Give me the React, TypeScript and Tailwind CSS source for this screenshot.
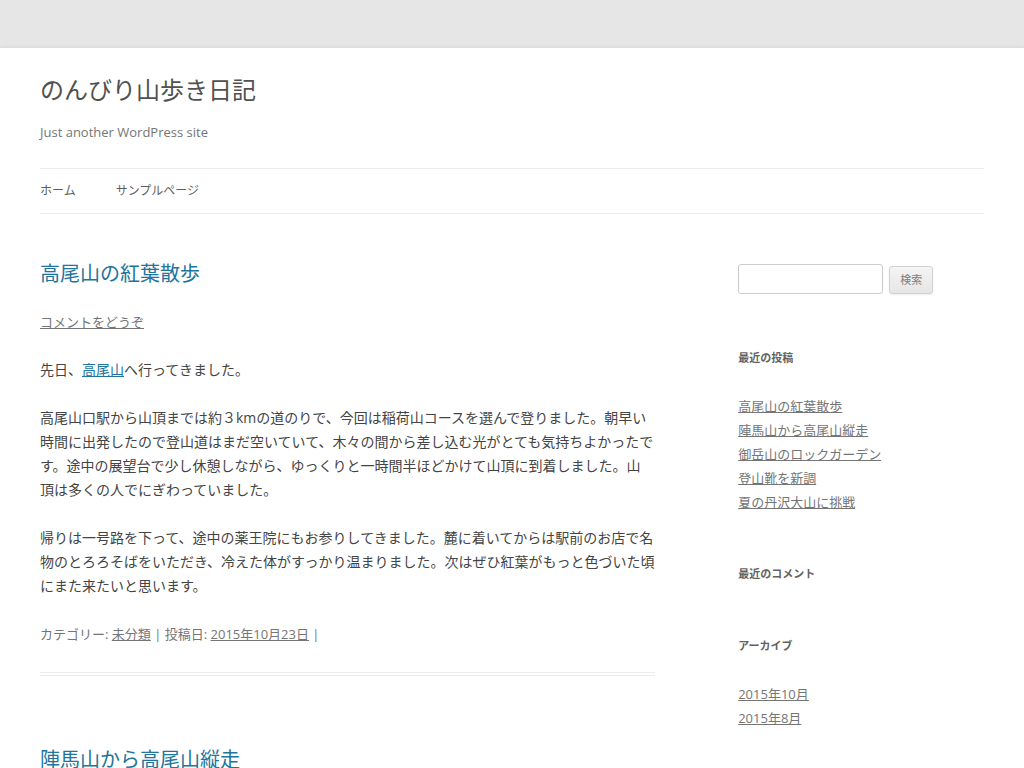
const recentPosts = [
  "高尾山の紅葉散歩",
  "陣馬山から高尾山縦走",
  "御岳山のロックガーデン",
  "登山靴を新調",
  "夏の丹沢大山に挑戦",
];

const archives = ["2015年10月", "2015年8月"];

export default function App() {
  return (
    <div className="min-h-screen bg-[#e6e6e6] pt-[48px] font-['Open_Sans','Noto_Sans_CJK_JP',sans-serif] text-[#444]">
      <div className="min-h-[720px] bg-white px-[40px] shadow-[0_2px_6px_rgba(100,100,100,0.3)]">
        <header className="pt-[27px] pb-[24px]">
          <h1 className="mb-[14px] text-[24px] leading-[30.86px] text-[#515151]">
            のんびり山歩き日記
          </h1>
          <h2 className="text-[13px] leading-[24px] text-[#757575]">
            Just another WordPress site
          </h2>
          <nav className="mt-[24px] border-y border-[#ededed]">
            <ul className="flex text-[12px] leading-[44.3px] text-[#5e5e5e]">
              <li className="mr-[40px]">ホーム</li>
              <li className="mr-[40px]">サンプルページ</li>
            </ul>
          </nav>
        </header>

        <div className="flex justify-between pt-[24px]">
          <main className="w-[65.104166667%]">
            <article className="mb-[72px] border-b-4 border-double border-[#ededed] pb-[26px]">
              <EntryHeader title="高尾山の紅葉散歩" />
              <div className="text-[14px] leading-[24px]">
                <p className="mb-[24px]">
                  先日、<a className="text-[#21759b] underline">高尾山</a>へ行ってきました。
                </p>
                <p className="mb-[24px]">
                  高尾山口駅から山頂までは約３kmの道のりで、今回は稲荷山コースを選んで登りました。朝早い時間に出発したので登山道はまだ空いていて、木々の間から差し込む光がとても気持ちよかったです。途中の展望台で少し休憩しながら、ゆっくりと一時間半ほどかけて山頂に到着しました。山頂は多くの人でにぎわっていました。
                </p>
                <p className="mb-[24px]">
                  帰りは一号路を下って、途中の薬王院にもお参りしてきました。麓に着いてからは駅前のお店で名物のとろろそばをいただき、冷えた体がすっかり温まりました。次はぜひ紅葉がもっと色づいた頃にまた来たいと思います。
                </p>
              </div>
              <footer className="text-[13px] leading-[24px] text-[#757575]">
                カテゴリー: <a className="underline">未分類</a> | 投稿日:{" "}
                <a className="underline">2015年10月23日</a> |
              </footer>
            </article>

            <article className="mb-[72px] pb-[24px]">
              <EntryHeader title="陣馬山から高尾山縦走" />
              <div className="text-[14px] leading-[24px]">
                <p className="mb-[24px]">
                  八月の終わりに、陣馬山から高尾山までの縦走に挑戦しました。
                </p>
              </div>
            </article>
          </main>

          <aside className="w-[26.041666667%]">
            <section className="mb-[48px] h-[36px]">
              <form className="flex items-end gap-[6px] pt-[2px]">
                <input
                  type="text"
                  className="h-[30px] w-[145px] rounded-[3px] border border-[#ccc] px-[6px] text-[12px] outline-none"
                />
                <button
                  type="button"
                  className="h-[28px] rounded-[3px] border border-[#d2d2d2] bg-linear-to-b from-[#f4f4f4] to-[#e6e6e6] px-[10px] text-[11px] leading-[16px] text-[#7c7c7c] shadow-[0_1px_2px_rgba(64,64,64,0.1)]"
                >
                  検索
                </button>
              </form>
            </section>

            <Widget title="最近の投稿" items={recentPosts} />
            <Widget title="最近のコメント" items={[]} />
            <Widget title="アーカイブ" items={archives} />
          </aside>
        </div>
      </div>
    </div>
  );
}

function EntryHeader({ title }: { title: string }) {
  return (
    <header className="mb-[24px]">
      <h1 className="text-[20px] leading-[24px] text-[#21759b]">{title}</h1>
      <div className="mt-[24px] text-[13px] leading-[24px] text-[#757575]">
        <a className="underline">コメントをどうぞ</a>
      </div>
    </header>
  );
}

function Widget({ title, items }: { title: string; items: string[] }) {
  return (
    <section className="mb-[48px]">
      <h3
        className={
          items.length > 0
            ? "mb-[24px] text-[11px] font-bold uppercase leading-[24px] text-[#636363]"
            : "text-[11px] font-bold uppercase leading-[24px] text-[#636363]"
        }
      >
        {title}
      </h3>
      {items.length > 0 && (
        <ul className="text-[13px] leading-[24px]">
          {items.map((item) => (
            <li key={item}>
              <a className="text-[#757575] underline">{item}</a>
            </li>
          ))}
        </ul>
      )}
    </section>
  );
}
